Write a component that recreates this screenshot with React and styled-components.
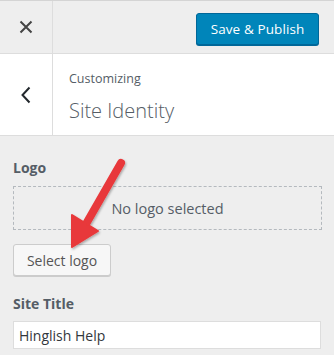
import React from 'react'
import styled, {createGlobalStyle} from 'styled-components'

const GlobalStyle = createGlobalStyle`
  html, body {
    margin: 0;
    padding: 0;
    background: #eeeeee;
  }
  body {
    font-family: "Open Sans", "Noto Sans", sans-serif;
    color: #555d66;
  }
`

const Panel = styled.div`
  position: relative;
  width: 334px;
  height: 355px;
  overflow: hidden;
  background: #eeeeee;
`

const TopBar = styled.header`
  display: flex;
  align-items: stretch;
  height: 52px;
  border-top: 1px solid #d4d4d4;
  border-bottom: 1px solid #dddddd;
  background: #eeeeee;
`

const IconCell = styled.div`
  width: 52px;
  flex: none;
  display: flex;
  align-items: center;
  justify-content: center;
  border-right: 1px solid #dddddd;
  color: #444;
`

const TopActions = styled.div`
  flex: 1;
  display: flex;
  align-items: center;
  justify-content: flex-end;
  padding-right: 15px;
`

const PublishButton = styled.button`
  height: 32px;
  width: 123px;
  padding: 0;
  border: 1px solid #006799;
  border-radius: 3px;
  background: #0085ba;
  box-shadow: 0 1px 0 #006799;
  color: #fff;
  font-family: "Open Sans", "Noto Sans", sans-serif;
  font-size: 13.5px;
  margin-top: 4px;
  letter-spacing: 0.1px;
`

const Header = styled.div`
  display: flex;
  height: 81px;
  background: #fff;
  border-bottom: 1px solid #dddddd;
`

const Titles = styled.div`
  display: flex;
  flex-direction: column;
  padding: 16px 0 0 16px;
`

const Small = styled.span`
  font-size: 12.5px;
  color: #555d66;
  line-height: 18px;
`

const Big = styled.span`
  font-size: 20px;
  font-weight: 300;
  color: #555d66;
  line-height: 28px;
  margin-top: 9px;
`

const Section = styled.div`
  padding: 22px 12px 0 13px;
`

const Label = styled.div`
  font-size: 14px;
  font-weight: 700;
  color: #555d66;
  line-height: 20px;
`

const Placeholder = styled.div`
  margin-top: 8px;
  height: 42px;
  border: 1px dashed #b4b9be;
  display: flex;
  align-items: center;
  justify-content: center;
  font-size: 14.5px;
  color: #555d66;
`

const SelectButton = styled.button`
  margin-top: 14px;
  height: 32px;
  width: 98px;
  padding: 0;
  border: 1px solid #cccccc;
  border-radius: 3px;
  background: #f7f7f7;
  box-shadow: 0 1px 0 #cccccc;
  color: #555;
  font-family: "Open Sans", "Noto Sans", sans-serif;
  font-size: 14px;
`

const FieldLabel = styled(Label)`
  margin-top: 18px;
`

const TextInput = styled.input`
  display: block;
  box-sizing: border-box;
  margin-top: 7px;
  width: 308px;
  height: 28px;
  padding: 0 5px;
  border: 1px solid #dddddd;
  background: #fff;
  color: #32373c;
  font-family: "Open Sans", "Noto Sans", sans-serif;
  font-size: 14px;
  outline: none;
`

const Arrow = styled.svg`
  position: absolute;
  left: 0;
  top: 0;
  pointer-events: none;
`

const App = () => (
  <>
    <GlobalStyle />
    <Panel>
      <TopBar>
        <IconCell>
          <svg width="14" height="14" viewBox="0 0 14 14">
            <path d="M1.5 1.5 L12.5 12.5 M12.5 1.5 L1.5 12.5" stroke="#444" strokeWidth="2" />
          </svg>
        </IconCell>
        <TopActions>
          <PublishButton type="button">Save &amp; Publish</PublishButton>
        </TopActions>
      </TopBar>
      <Header>
        <IconCell>
          <svg width="10" height="18" viewBox="0 0 10 18">
            <path d="M8.5 1.5 L1.5 9 L8.5 16.5" stroke="#23282d" strokeWidth="2" fill="none" />
          </svg>
        </IconCell>
        <Titles>
          <Small>Customizing</Small>
          <Big>Site Identity</Big>
        </Titles>
      </Header>
      <Section>
        <Label>Logo</Label>
        <Placeholder>No logo selected</Placeholder>
        <SelectButton type="button">Select logo</SelectButton>
        <FieldLabel>Site Title</FieldLabel>
        <TextInput readOnly value="Hinglish Help" />
      </Section>
      <Arrow width="334" height="355" viewBox="0 0 334 355">
        <defs>
          <filter id="sh" x="-20%" y="-20%" width="140%" height="140%">
            <feDropShadow dx="1" dy="1.5" stdDeviation="1.2" floodColor="#000" floodOpacity="0.3" />
          </filter>
        </defs>
        <g filter="url(#sh)" fill="#e8393a" stroke="#e8393a" strokeLinejoin="round">
          <path d="M121 163 L86 224" strokeWidth="8" strokeLinecap="round" fill="none" />
          <path d="M72 247 L72 215 L98 231 Z" strokeWidth="2" />
        </g>
      </Arrow>
    </Panel>
  </>
)

export default App
